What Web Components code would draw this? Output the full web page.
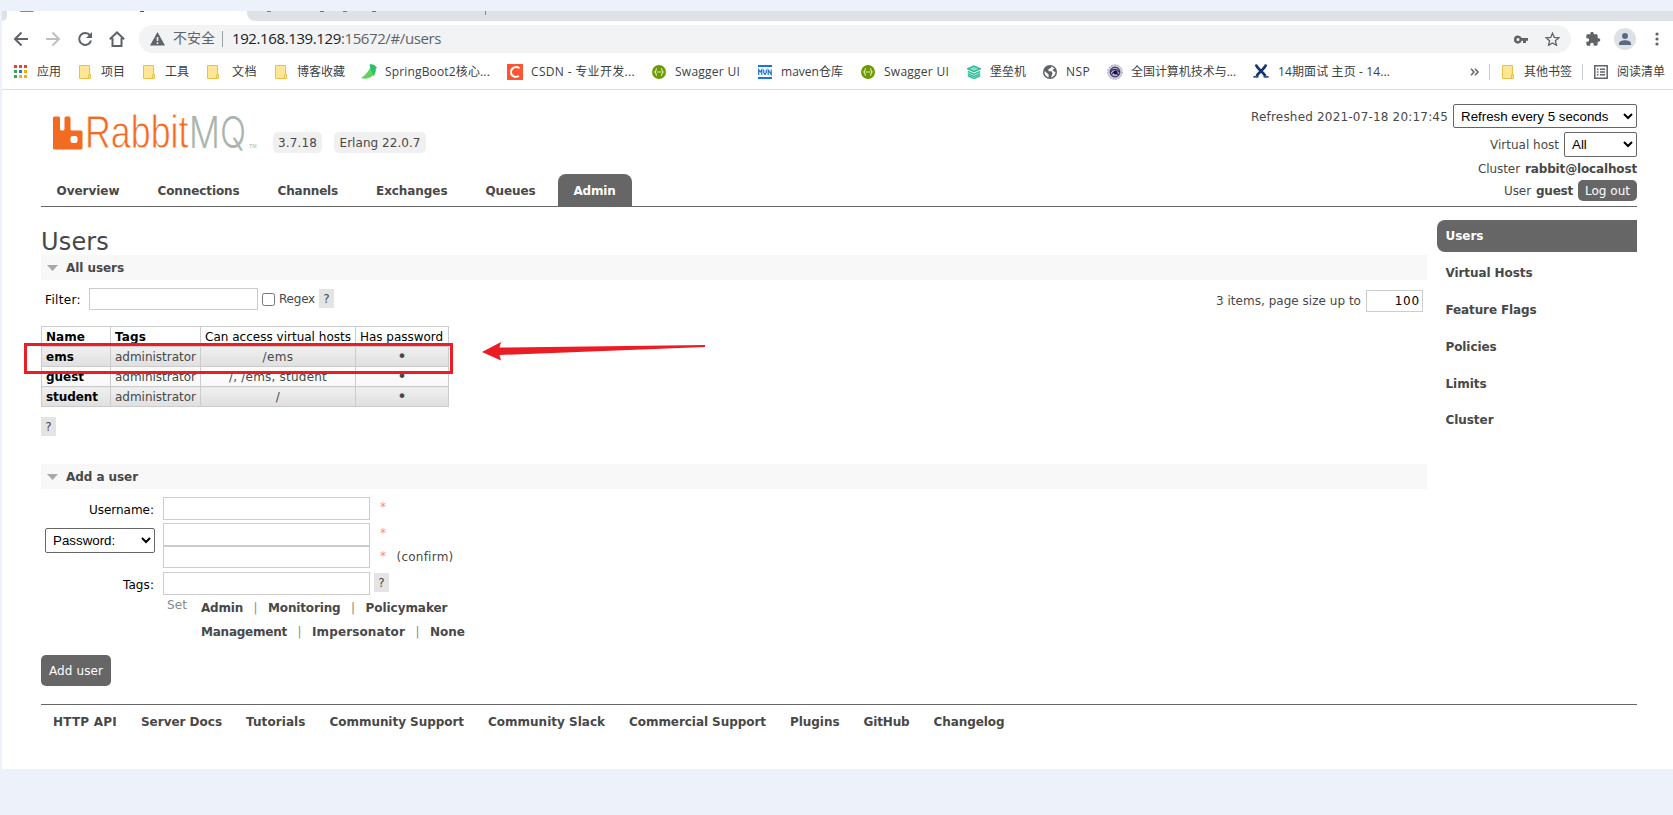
<!DOCTYPE html>
<html lang="zh-CN">
<head>
<meta charset="utf-8">
<title>RabbitMQ Management</title>
<style>
    html, body { margin: 0; height: 815px; overflow: hidden; background: #edf1fa; }
    body { font: 12px/20px "DejaVu Sans", Verdana, sans-serif; color: #484848; }
</style>
</head>
<body>
<browser-window>
    <tab-strip></tab-strip>
    <address-bar></address-bar>
    <bookmark-bar></bookmark-bar>
    <management-page>
        <page-header slot="header"></page-header>
        <page-section slot="main" heading="All users">
            <filter-bar></filter-bar>
            <users-table></users-table>
            <help-badge></help-badge>
        </page-section>
        <page-section slot="main" heading="Add a user" class="add">
            <add-user-form></add-user-form>
        </page-section>
        <side-menu slot="side"></side-menu>
        <page-footer slot="footer"></page-footer>
    </management-page>
</browser-window>
<mark-overlay></mark-overlay>

<script>
class BaseElement extends HTMLElement {
    constructor() {
        super();
        this.$ = {};
        this.$.root = this.attachShadow({mode: 'open'});
        this.$.root.innerHTML = `<style>*{box-sizing:border-box} ${this.constructor.styles}</style>${this.template}`;
    }
    static get styles() { return ":host { display: block; }"; }
    get template() { return "<slot></slot>"; }
}

class BrowserWindow extends BaseElement {
    static get styles() { return `
        :host { display: flex; flex-direction: column; box-sizing: border-box; height: 769px; padding: 11px 0 0 2px;
            background: linear-gradient(#edf1fa 11px, transparent 11px), linear-gradient(90deg, #edf1fa 2px, #fff 2px); }
    `; }
}

class TabStrip extends BaseElement {
    static get styles() { return `
        :host { display: flex; height: 10px; overflow: hidden; flex: none; }
        .edge { width: 5px; background: #dee1e6; border-bottom-right-radius: 6px; }
        .active { width: 240px; }
        .rest { flex: 1; background: #dee1e6; border-bottom-left-radius: 8px; }
        svg { display: block; }
    `; }
    get template() { return `
        <div class="edge"></div>
        <div class="active"><svg width="240" height="10"><path d="M14 0h12l1 1H12z" fill="#f60"/><path d="M133 0h4v1h-4z" fill="#555"/></svg></div>
        <div class="rest"><svg width="260" height="10"><path d="M20 0h4v1h-4z" fill="#3b8fd0"/><path d="M73 0h4v1h-4zM96 0h4v1h-4zM125 0h4v1h-4z" fill="#70757a"/><path d="M238 0h1v4h-1z" fill="#80868b"/></svg></div>
    `; }
}

class AddressBar extends BaseElement {
    static get styles() { return `
        :host { display: flex; height: 36px; flex: none; align-items: center; padding: 0 12px 0 11px; font: 15px/28px "Open Sans", "Noto Sans CJK SC", sans-serif; color: #5f6368; }
        svg { display: block; flex: none; }
        .nav { display: flex; gap: 16px; margin-right: 14px; }
        .nav svg { width: 16px; height: 16px; }
        .pill { display: flex; align-items: center; width: 1432px; height: 28px; border-radius: 14px; background: #f1f3f4; padding: 0 11px; }
        .pill fit-text { margin-bottom: 2px; }
        .warn { font-size: 14px; margin-left: 8px; }
        .bar { width: 1px; height: 16px; background: #9aa0a6; margin: 0 9px 0 7px; }
        b { font-weight: 400; color: #202124; }
        .key { margin-left: auto; margin-right: 17px; }
        .ext { margin-left: 14px; }
        .who { margin: 0 19px 0 13px; }
    `; }
    get template() { return `
        <div class="nav">
            <svg viewBox="0 0 16 16" fill="none" stroke="#5f6368" stroke-width="2"><path d="M15 8H2.500M8.500 1.500L2 8l6.500 6.500"/></svg>
            <svg viewBox="0 0 16 16" fill="none" stroke="#bdc0c3" stroke-width="2"><path d="M1 8h12.500M7.500 1.500L14 8l-6.500 6.500"/></svg>
            <svg viewBox="0 0 16 16" fill="none" stroke="#5f6368" stroke-width="2"><path d="M13 4.300A6 6 0 1 0 14 9.500"/><path d="M15 1v6H9z" fill="#5f6368" stroke="none"/></svg>
            <svg viewBox="0 0 16 16" fill="none" stroke="#5f6368" stroke-width="2"><path d="M.8 8.300L8 1.500l7.200 6.800M3.500 7v8h9V7" /></svg>
        </div>
        <div class="pill">
            <svg width="15" height="14" viewBox="0 0 15 14"><path d="M7.500 0L15 13.500H0z" fill="#5f6368"/><path d="M6.700 5h1.600v4H6.700zM6.700 10.300h1.600v1.600H6.700z" fill="#f1f3f4"/></svg>
            <fit-text class="warn" w="42">不安全</fit-text>
            <span class="bar"></span>
            <fit-text w="209"><b>192.168.139.129</b>:15672/#/users</fit-text>
            <svg class="key" width="14" height="9" viewBox="0 0 14 9"><path d="M4 .5a4 4 0 1 0 3.700 5.300H9V8h3V5.800h2V3H7.700A4 4 0 0 0 4 .5zm0 2.400a1.500 1.500 0 1 1 0 3.100 1.500 1.500 0 0 1 0-3.100z" fill="#5f6368"/></svg>
            <svg width="15" height="14" viewBox="0 0 15 14"><path d="M7.500 1.200l1.800 4.200 4.600.4-3.500 3 1.100 4.500-4-2.400-4 2.400 1.100-4.500-3.500-3 4.600-.4z" fill="none" stroke="#5f6368" stroke-width="1.300"/></svg>
        </div>
        <svg class="ext" width="16" height="16" viewBox="0 0 24 24"><path d="M20.500 11H19V7a2 2 0 0 0-2-2h-4V3.500a2.500 2.500 0 0 0-5 0V5H4a2 2 0 0 0-2 2v3.800h1.500a2.700 2.700 0 0 1 0 5.400H2V20a2 2 0 0 0 2 2h3.800v-1.500a2.700 2.700 0 0 1 5.400 0V22H17a2 2 0 0 0 2-2v-4h1.500a2.500 2.500 0 0 0 0-5z" fill="#5f6368"/></svg>
        <svg class="who" width="22" height="22" viewBox="0 0 22 22"><circle cx="11" cy="11" r="11" fill="#dee1e6"/><circle cx="11" cy="8" r="3" fill="#5a6a82"/><path d="M5 17v-1.500c0-2.300 3.500-3.300 6-3.300s6 1 6 3.300V17z" fill="#5a6a82"/></svg>
        <svg width="4" height="14" viewBox="0 0 4 14" fill="#5f6368"><circle cx="2" cy="2" r="1.600"/><circle cx="2" cy="7" r="1.600"/><circle cx="2" cy="12" r="1.600"/></svg>
    `; }
}

const ICONS = {
    apps: `<svg width="13" height="13"><path d="M0 0h3v3H0zM5 0h3v3H5zM10 0h3v3h-3z" fill="#ea4335"/><path d="M0 5h3v3H0zM0 10h3v3H0z" fill="#34a853"/><path d="M5 5h3v3H5z" fill="#1a73e8"/><path d="M10 5h3v3h-3zM5 10h3v3H5zM10 10h3v3h-3z" fill="#fbab00"/></svg>`,
    folder: `<svg width="12" height="14"><path d="M.5.5h10v9h1v4H.5z" fill="#ffe694" stroke="#e8c04c"/><path d="M9.500 13.500V10l2-.5" fill="none" stroke="#e8c04c"/></svg>`,
    bird: `<svg width="16" height="15" viewBox="0 0 16 15"><path d="M0 14C4 11.500 7 8 9 4L14 3.500C15 9 11 14 6 14.500c-2 .3-4 .2-6-.5z" fill="#5ed45c"/><path d="M8.500.5C11-.3 13.500.5 14.300 2L16 3.500 14.700 5c.3 3-.7 5.500-2.700 7.500C12.500 8 9.500 8 8.500.5z" fill="#2bc06c"/></svg>`,
    csdn: `<svg width="16" height="16"><path d="M0 0h16v16H0z" fill="#fc5531"/><path d="M12.500 4.300C8.500 1.500 4 4 4 8.300c0 4.200 4.200 5.700 8 3.700" fill="none" stroke="#fff" stroke-width="1.900"/></svg>`,
    swagger: `<svg width="14" height="14" viewBox="0 0 14 14"><circle cx="7" cy="7" r="7" fill="#6a9b00"/><path d="M5 3.500c-1.500 0-.5 3-2 3.500 1.500.5.500 3.500 2 3.500M9 3.500c1.500 0 .5 3 2 3.500-1.500.5-.5 3.500-2 3.500M5 7h4" fill="none" stroke="#dcebb5" stroke-width="1.200"/></svg>`,
    mvn: `<svg width="14" height="14"><path d="M0 0h14v2H0zM0 12h14v2H0z" fill="#1a73d9"/><path d="M.7 10V4.700L2.300 7l1.500-2.300V10M5.700 4.500v3L7 9.500l1.300-2v-3M10.200 10V5l3 4.500V4.500" fill="none" stroke="#1a73d9" stroke-width="1.200"/></svg>`,
    stack: `<svg width="14" height="14" viewBox="0 0 14 14" fill="none" stroke="#2fbe9b" stroke-width="1.500"><path d="M.8 3.800L7 1l6.200 2.800L7 6.600z" fill="#8fdcc8"/><path d="M.8 6.500L7 9.200l6.200-2.700M.8 8.700L7 11.400l6.200-2.700M.8 10.800L7 13.400l6.200-2.600"/></svg>`,
    globe: `<svg width="14" height="14" viewBox="0 0 14 14"><circle cx="7" cy="7" r="7" fill="#5f6368"/><path d="M8.500 1.300L8 3 5.500 4v2.300h3l1 2L8 12.500c2.500-.4 4.500-2.800 4.500-5.500L11 6.500 9.500 5l2-1.500zM1.600 6l4 3.500v3A5.600 5.600 0 0 1 1.600 6z" fill="#fff"/></svg>`,
    seal: `<svg width="16" height="16" viewBox="0 0 16 16"><circle cx="8" cy="8" r="7.300" fill="#d3d0e0" stroke="#a9a5c0" stroke-dasharray="2 1"/><circle cx="8" cy="8" r="4.800" fill="#b5b1cd" stroke="#3b3768" stroke-width="1.200"/><path d="M3.500 8c2-3.500 6-3.500 9 0M5 10c2-3 4-2 6.500 1" fill="none" stroke="#2b2858" stroke-width="1.200"/><circle cx="8.500" cy="8.500" r="2" fill="#161235"/></svg>`,
    cross: `<svg width="16" height="15" viewBox="0 0 16 15" fill="none" stroke="#12356f"><path d="M3 .5c.5 3.500 6 6.500 9.500 11.500M13 .5C12.500 4 7 7 3.500 12" stroke-width="2.600"/><path d="M.5 13.300c1.500-1.800 2.500 1 5-.8M15.500 13.300c-1.500-1.800-2.500 1-5-.8" stroke-width="1.500"/></svg>`,
    list: `<svg width="14" height="14"><path d="M.8.8h12.400v12.400H.8z" fill="none" stroke="#5f6368" stroke-width="1.500"/><path d="M3 3.500h1.500V5H3zM6 3.500h5V5H6zM3 6.300h1.500v1.500H3zM6 6.300h5v1.500H6zM3 9h1.500v1.500H3zM6 9h5v1.500H6z" fill="#5f6368"/></svg>`
};

// icon, space before it, space to the label, label, label width
const BOOKMARKS = [
    ["apps", 0, 10, "应用", 24],
    ["folder", 18, 10, "项目", 24],
    ["folder", 18, 10, "工具", 24],
    ["folder", 18, 13, "文档", 25],
    ["folder", 18, 10, "博客收藏", 48],
    ["bird", 16, 8, "SpringBoot2核心...", 105],
    ["csdn", 17, 8, "CSDN - 专业开发...", 104],
    ["swagger", 17, 9, "Swagger UI", 65],
    ["mvn", 18, 9, "maven仓库", 62],
    ["swagger", 18, 9, "Swagger UI", 65],
    ["stack", 18, 9, "堡垒机", 36],
    ["globe", 17, 9, "NSP", 24],
    ["seal", 17, 8, "全国计算机技术与...", 105],
    ["cross", 17, 9, "14期面试 主页 - 14...", 112]
];

class BookmarkBar extends BaseElement {
    static get styles() { return `
        :host { display: flex; box-sizing: border-box; height: 33px; flex: none; align-items: center; padding: 0 8px 3px 12px; border-bottom: 1px solid #dadce0;
            font: 12px/18px "Open Sans", "Noto Sans CJK SC", sans-serif; color: #3c4043; }
        svg { display: block; flex: none; }
        .more { margin-left: auto; margin-right: 10px; }
        i { width: 1px; height: 16px; background: #c8cbcf; }
    `; }
    get template() {
        const item = ([icon, before, gap, label, w]) =>
            `<span style="margin-left:${before}px">${ICONS[icon]}</span><fit-text style="margin-left:${gap}px" w="${w}">${label}</fit-text>`;
        return BOOKMARKS.map(item).join("") + `
            <svg class="more" width="9" height="8" viewBox="0 0 9 8"><path d="M1 .8L4 4 1 7.200M5 .8L8 4 5 7.200" fill="none" stroke="#5f6368" stroke-width="1.500"/></svg><i></i>
            ${item(["folder", 12, 10, "其他书签", 48])}
            <i style="margin-left:10px"></i>${item(["list", 11, 9, "阅读清单", 48])}`;
    }
}

class ManagementPage extends BaseElement {
    static get styles() { return `
        :host { display: flex; flex-direction: column; padding: 0 36px 0 39px; }
        .body { display: flex; justify-content: space-between; height: 497px; }
        .main { width: 1386px; padding-top: 22px; }
        h1 { margin: 0; height: 26px; font-size: 24px; line-height: 27px; font-weight: 400; }
    `; }
    get template() { return `
        <slot name="header"></slot>
        <div class="body">
            <div class="main"><h1><fit-text w="68">Users</fit-text></h1><slot name="main"></slot></div>
            <slot name="side"></slot>
        </div>
        <slot name="footer"></slot>
    `; }
}

class PageHeader extends BaseElement {
    static get styles() { return `
        :host { display: flex; box-sizing: border-box; height: 117px; justify-content: space-between; border-bottom: 1px solid #666; }
        .left { display: flex; flex-direction: column; justify-content: space-between; }
        .brand { display: flex; align-items: flex-start; padding: 22px 0 0 12px; }
        .logo { display: flex; width: 220px; height: 40px; align-items: flex-start; color: #a9b5ae; }
        .rabbit { margin-left: 1.500px; font: 46px/41px "Liberation Sans", sans-serif; color: #f36b21; -webkit-text-stroke: .8px #fff; }
        .mq { margin-left: 1px; font: 300 44px/41px Inter, sans-serif; }
        .tm { margin-left: 3px; font: 6px/69px "Liberation Sans", sans-serif; }
        svg { display: block; flex: none; }
        .pill { margin-top: 20px; height: 21px; line-height: 22px; padding: 0 5px; background: #f0f0f0; border-radius: 5px; }
        nav { display: flex; gap: 6px; font-weight: 700; }
        nav span { height: 32px; line-height: 34px; padding: 0 16.500px 0 15.500px; border-radius: 8px 8px 0 0; }
        .on { background: #666; color: #fff; }
        .right { display: grid; justify-items: end; align-content: start; padding-top: 14px; }
        .right div { display: flex; align-items: center; gap: 5px; }
        select { font: 13.333px "Liberation Sans", Arial, sans-serif; color: #000; background: #fff; border: 1px solid #666; border-radius: 2px; padding: 0 3px; }
        .out { height: 21px; line-height: 22px; padding: 0 7px; border-radius: 5px; background: #666; color: #fff; }
    `; }
    get template() { return `
        <div class="left">
            <div class="brand">
                <div class="logo">
                    <svg width="30" height="40"><path fill-rule="evenodd" d="M0 6q0-1.500 1.500-1.500h4Q7 4.500 7 6v11q0 1.500 1.500 1.500H10q1.500 0 1.500-1.500V6q0-1.500 1.500-1.500h3q1.500 0 1.500 1.500v11q0 1.500 1.500 1.500h9q1.500 0 1.500 1.500v16q0 1.500-1.500 1.500h-27Q0 37.500 0 36zM19.500 24q-2 0-2 2v3q0 2 2 2h3q2 0 2-2v-3q0-2-2-2z" fill="#f36b21"/></svg>
                    <fit-text stretch class="rabbit" w="103.5">Rabbit</fit-text><fit-text stretch class="mq" w="57">MQ</fit-text><fit-text stretch class="tm" w="7.5">TM</fit-text>
                </div>
                <span class="pill"><fit-text w="39">3.7.18</fit-text></span>
                <span class="pill" style="margin-left:12px;padding:0 5.500px"><fit-text w="81">Erlang 22.0.7</fit-text></span>
            </div>
            <nav>
                <span><fit-text w="63">Overview</fit-text></span>
                <span><fit-text w="82">Connections</fit-text></span>
                <span><fit-text w="60.5">Channels</fit-text></span>
                <span><fit-text w="71.5">Exchanges</fit-text></span>
                <span><fit-text w="50">Queues</fit-text></span>
                <span class="on"><fit-text w="42">Admin</fit-text></span>
            </nav>
        </div>
        <div class="right">
            <div><fit-text w="197" style="margin-top:2px">Refreshed 2021-07-18 20:17:45</fit-text><select style="width:184px;height:24px"><option>Refresh every 5 seconds</option></select></div>
            <div style="margin-top:4px"><fit-text w="69">Virtual host</fit-text><select style="width:73px;height:25px"><option>All</option></select></div>
            <div style="margin-top:2px"><fit-text w="42">Cluster</fit-text><b><fit-text w="112">rabbit@localhost</fit-text></b></div>
            <div style="margin-top:1px"><fit-text w="27" style="margin-top:1px">User</fit-text><b><fit-text w="37" style="margin-top:1px">guest</fit-text></b><span class="out"><fit-text w="45">Log out</fit-text></span></div>
        </div>
    `; }
}

class PageSection extends BaseElement {
    static get styles() { return `
        :host { display: block; height: 209px; }
        h2 { display: flex; align-items: center; gap: 8px; margin: 0; height: 25px; padding: 0 6px; background: #f8f8f8; font-size: 12px; line-height: 25px; font-weight: 700; }
        fit-text { padding-top: 2px; }
    `; }
    get template() { return `<h2><svg width="11" height="6"><path d="M0 0h11L5.500 6z" fill="#a8a8a8"/></svg><fit-text w="${this.getAttribute("heading") == "All users" ? 58 : 72}">${this.getAttribute("heading")}</fit-text></h2><slot></slot>`; }
}

class HelpBadge extends BaseElement {
    static get styles() { return `
        :host { display: block; width: 15px; height: 19px; line-height: 20px; text-align: center; background: #e4e4e4; flex: none; }
    `; }
    get template() { return "?"; }
}

class FilterBar extends BaseElement {
    static get styles() { return `
        :host { display: flex; height: 46px; align-items: flex-start; padding: 8px 4px 0; box-sizing: border-box; }
        fit-text { margin-top: 1px; }
        input { border: 1px solid #ccc; margin: 0; padding: 1px 3px; }
        .text { width: 169px; height: 22px; margin: 0 4px 0 8px; }
        .check { width: 13px; height: 13px; margin: 5px 4px 0 0; }
        help-badge { margin: 1px auto 0 4px; }
        .size { width: 57px; height: 22px; margin: 2px 0 0 5px; text-align: right; font: 12px "DejaVu Sans", sans-serif; letter-spacing: .8px; padding-right: 2px; }
    `; }
    get template() { return `
        <fit-text w="36" style="color:#000;margin-top:2px">Filter:</fit-text><input class="text">
        <input type="checkbox" class="check"><fit-text w="36">Regex</fit-text><help-badge></help-badge>
        <fit-text w="145" style="margin-top:3px">3 items, page size up to</fit-text><input class="size" value="100">
    `; }
}

class UsersTable extends BaseElement {
    static get styles() { return `
        :host { display: block; margin-bottom: 10px; }
        table { border-collapse: collapse; table-layout: fixed; width: 408px; }
        th, td { height: 20px; padding: 1px 4px 0; border: 1px solid #ccc; line-height: 18px; text-align: left; vertical-align: top; }
        th { color: #000; }
        .plain { font-weight: 400; }
        .c { text-align: center; }
        .dot { font-size: 16px; line-height: 18px; height: 18px; vertical-align: top; }
        tbody tr td, tbody tr th { background: linear-gradient(#fff, #f8f8f8); }
        tbody tr:nth-child(odd) td, tbody tr:nth-child(odd) th { background: linear-gradient(#f0f0f0, #dfdfdf); }
    `; }
    get template() {
        const users = [["ems", 28, "/ems", 31], ["guest", 38, "/, /ems, student", 98], ["student", 52, "/", 4.5]];
        return `<table>
            <colgroup><col style="width:69px"><col style="width:90px"><col style="width:155px"><col style="width:93px"></colgroup>
            <thead><tr><th><fit-text w="39">Name</fit-text></th><th><fit-text w="31">Tags</fit-text></th><th class="plain"><fit-text w="146">Can access virtual hosts</fit-text></th><th class="plain"><fit-text w="83">Has password</fit-text></th></tr></thead>
            <tbody>${users.map(([name, w, hosts, hw]) => `<tr><th><fit-text w="${w}">${name}</fit-text></th><td><fit-text w="81">administrator</fit-text></td><td class="c"><fit-text w="${hw}">${hosts}</fit-text></td><td class="c"><fit-text class="dot" w="9.5">•</fit-text></td></tr>`).join("")}</tbody>
        </table>`;
    }
}

class AddUserForm extends BaseElement {
    static get styles() { return `
        :host { display: block; }
        .grid { display: grid; grid-template-columns: 110px 207px 1fr; column-gap: 8px; padding: 8px 0 0 4px; grid-template-rows: 26px 49px 24px; }
        .label { text-align: right; color: #000; line-height: 26px; padding-right: 1px; }
        input { display: block; width: 207px; height: 23px; margin: 0; border: 1px solid #ccc; }
        select { width: 110px; height: 25px; margin-top: 5px; font: 13.333px "Liberation Sans", Arial, sans-serif; color: #000; background: #fff; border: 1px solid #666; border-radius: 2px; padding: 0 3px; }
        .star { display: block; color: #f88; height: 23px; line-height: 21px; padding-left: 2px; }
        .row { display: flex; }
        .tags { display: flex; padding: 0 0 0 126px; height: 49px; }
        .set { color: #888; line-height: 19px; }
        .links { margin-left: 14px; font-weight: 700; }
        .links div { display: flex; height: 24px; line-height: 24px; }
        .links i { font: inherit; font-weight: 400; color: #888; width: 25px; text-align: center; }
        button { display: block; width: 70px; height: 31px; margin-top: 10px; padding: 1px 0 0; border: 0; border-radius: 5px; background: #666; color: #fff; font: 12px "DejaVu Sans", sans-serif; }
    `; }
    get template() { return `
        <div class="grid">
            <div class="label"><fit-text w="65">Username:</fit-text></div><input><span class="star">*</span>
            <select><option>Password:</option></select>
            <div><input><input style="height:22px"></div>
            <div><span class="star">*</span><div class="row"><span class="star">*</span><fit-text w="57" style="margin-left:10.5px;line-height:23px">(confirm)</fit-text></div></div>
            <div class="label"><fit-text w="31">Tags:</fit-text></div><input><help-badge style="margin:1px 0 0 -4px"></help-badge>
        </div>
        <div class="tags">
            <fit-text class="set" w="20">Set</fit-text>
            <div class="links">
                <div><fit-text w="42">Admin</fit-text><i>|</i><fit-text w="72.5">Monitoring</fit-text><i>|</i><fit-text w="82">Policymaker</fit-text></div>
                <div><fit-text w="86">Management</fit-text><i>|</i><fit-text w="93">Impersonator</fit-text><i>|</i><fit-text w="35">None</fit-text></div>
            </div>
        </div>
        <button><fit-text w="54">Add user</fit-text></button>
    `; }
}

class SideMenu extends BaseElement {
    static get styles() { return `
        :host { display: grid; width: 200px; align-content: start; gap: 5px; padding-top: 13px; font-weight: 700; }
        div { height: 32px; line-height: 33px; padding-left: 8.500px; }
        div:last-child { line-height: 31px; }
        .on { background: #666; color: #fff; border-radius: 8px 0 0 8px; }
    `; }
    get template() {
        return [["Users", 38], ["Virtual Hosts", 87], ["Feature Flags", 91], ["Policies", 51], ["Limits", 41], ["Cluster", 48]]
            .map(([t, w], i) => `<div class="${i ? "" : "on"}"><fit-text w="${w}">${t}</fit-text></div>`).join("");
    }
}

class PageFooter extends BaseElement {
    static get styles() { return `
        :host { display: flex; gap: 24px; border-top: 1px solid #666; padding: 7px 12px; font-weight: 700; }
    `; }
    get template() {
        return [["HTTP API", 64], ["Server Docs", 81], ["Tutorials", 59.5], ["Community Support", 134.5], ["Community Slack", 117], ["Commercial Support", 137], ["Plugins", 49.5], ["GitHub", 46], ["Changelog", 71]]
            .map(([t, w]) => `<fit-text w="${w}">${t}</fit-text>`).join("");
    }
}

// red box and arrow drawn over the first user row
class MarkOverlay extends BaseElement {
    static get styles() { return `
        :host { position: absolute; left: 0; top: 330px; pointer-events: none; }
        svg { display: block; }
    `; }
    get template() { return `<svg width="720" height="50"><path d="M25.500 14.500h426v28h-426z" fill="none" stroke="#ed1c24" stroke-width="3"/><path d="M482 22l19-10-1.500 5.500L705 15v2L499.500 25l1.500 5.500z" fill="#ed1c24"/></svg>`; }
}

// spreads its text over exactly w pixels, or scales the glyphs with the stretch attribute
class FitText extends BaseElement {
    static get styles() { return ":host { display: inline-block; flex: none; white-space: nowrap; } span { display: inline-block; transform-origin: 0 0; }"; }
    get template() { return "<span><slot></slot></span>"; }
    connectedCallback() {
        const w = Number(this.getAttribute("w"));
        const span = this.$.root.querySelector("span");
        const natural = span.getBoundingClientRect().width;
        if (this.hasAttribute("stretch")) span.style.transform = `scaleX(${w / natural})`;
        else this.style.letterSpacing = `${(w - natural) / this.textContent.length}px`;
        this.style.width = `${w}px`;
    }
}

customElements.define("browser-window", BrowserWindow);
customElements.define("tab-strip", TabStrip);
customElements.define("address-bar", AddressBar);
customElements.define("bookmark-bar", BookmarkBar);
customElements.define("management-page", ManagementPage);
customElements.define("page-header", PageHeader);
customElements.define("page-section", PageSection);
customElements.define("help-badge", HelpBadge);
customElements.define("filter-bar", FilterBar);
customElements.define("users-table", UsersTable);
customElements.define("add-user-form", AddUserForm);
customElements.define("side-menu", SideMenu);
customElements.define("page-footer", PageFooter);
customElements.define("mark-overlay", MarkOverlay);
// last, so that everything around the texts is laid out when they are measured
customElements.define("fit-text", FitText);
</script>
</body>
</html>
